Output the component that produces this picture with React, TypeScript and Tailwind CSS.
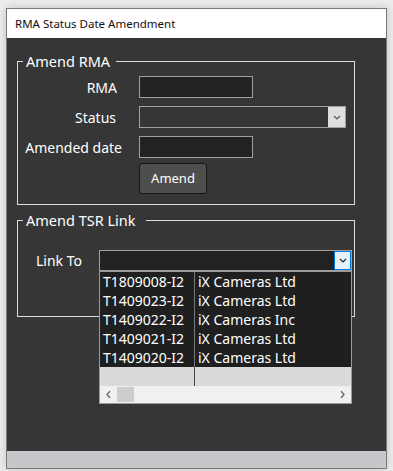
const rows = [
  ['T1809008-I2', 'iX Cameras Ltd'],
  ['T1409023-I2', 'iX Cameras Ltd'],
  ['T1409022-I2', 'iX Cameras Inc'],
  ['T1409021-I2', 'iX Cameras Ltd'],
  ['T1409020-I2', 'iX Cameras Ltd'],
];

function Chevron({ color = '#333', dir = 'down' }: { color?: string; dir?: 'down' | 'left' | 'right' }) {
  const pts = dir === 'down' ? '1,1 4,4 7,1' : dir === 'left' ? '4,0 1,3.5 4,7' : '1,0 4,3.5 1,7';
  const w = dir === 'down' ? 8 : 5;
  const h = dir === 'down' ? 5 : 7;
  return (
    <svg width={w} height={h} viewBox={`0 0 ${w} ${h}`}>
      <polyline points={pts} fill="none" stroke={color} strokeWidth="1.2" />
    </svg>
  );
}

export default function App() {
  return (
    <div className="w-[393px] h-[471px] bg-[#ececec] pt-[8px] px-[6px] pb-[2px] font-['Noto_Sans',sans-serif]">
      <div className="h-full flex flex-col border border-[#7a7a7a] shadow-[0_0_8px_rgba(0,0,0,0.18)]">
        {/* title bar */}
        <div className="h-[29px] bg-white flex items-center pl-[8px] text-[11.5px] text-[#111]">
          RMA Status Date Amendment
        </div>

        {/* body */}
        <div className="flex-1 bg-[#363636] pl-[10px] pr-[31px] pt-[15px] text-white text-[14px]">
          {/* Amend RMA */}
          <fieldset className="border border-[#dcdcdc] pt-[7px] pb-[10px]">
            <legend className="ml-[5px] pl-[3px] pr-[6px] leading-[16px] text-[14.5px]">Amend RMA</legend>
            <div className="flex flex-col gap-[8px]">
              <div className="flex items-center h-[22px]">
                <div className="w-[121px] text-right pr-[22px]">RMA</div>
                <div className="w-[114px] h-[22px] border border-[#a0a0a0] bg-[#222222]" />
              </div>
              <div className="flex items-center h-[22px]">
                <div className="w-[121px] text-right pr-[23px]">Status</div>
                <div className="w-[207px] h-[22px] border border-[#a0a0a0] bg-[#363636] flex justify-end">
                  <div className="w-[17px] h-full bg-[#dfdfdf] flex items-center justify-center">
                    <Chevron color="#555" />
                  </div>
                </div>
              </div>
              <div className="flex items-center h-[22px]">
                <div className="w-[121px] text-right pr-[17px]">Amended date</div>
                <div className="w-[114px] h-[22px] border border-[#a0a0a0] bg-[#222222]" />
              </div>
            </div>
            <button className="ml-[121px] mt-[5px] w-[68px] h-[31px] bg-[#4e4e4e] border border-[#151515] rounded-[3px] text-[13px] text-white flex items-center justify-center">
              Amend
            </button>
          </fieldset>

          {/* Amend TSR Link */}
          <fieldset className="mt-[7px] border border-[#dcdcdc] pt-[22px] pb-[45px]">
            <legend className="ml-[5px] pl-[3px] pr-[10px] leading-[16px] text-[14.5px]">Amend TSR Link</legend>
            <div className="flex items-center h-[21px]">
              <div className="w-[81px] pl-[18px]">Link To</div>
              <div className="relative w-[253px] h-[21px]">
                <div className="h-full border border-[#a0a0a0] bg-[#222222] flex justify-end">
                  <div className="w-[17px] h-full bg-[#e5f1fb] border border-[#0078d7] flex items-center justify-center">
                    <Chevron color="#222" />
                  </div>
                </div>

                {/* open drop-down list */}
                <div className="absolute left-0 top-[21px] w-[253px] border border-[#9a9a9a] bg-[#dadada] z-10">
                  <div className="flex">
                    <div className="w-[94px] bg-[#1f1f1f]">
                      {rows.map(([id]) => (
                        <div key={id} className="h-[19px] leading-[19px] pl-[3px] whitespace-nowrap">{id}</div>
                      ))}
                    </div>
                    <div className="w-px bg-[#777]" />
                    <div className="flex-1 bg-[#1f1f1f]">
                      {rows.map(([id, name]) => (
                        <div key={id} className="h-[19px] leading-[19px] pl-[3px] whitespace-nowrap">{name}</div>
                      ))}
                    </div>
                  </div>
                  <div className="flex h-[19px]">
                    <div className="w-[94px]" />
                    <div className="w-px bg-[#444]" />
                    <div className="flex-1" />
                  </div>
                  <div className="h-[17px] bg-[#f0f0f0] flex items-center">
                    <div className="w-[17px] flex items-center justify-center">
                      <Chevron dir="left" color="#606060" />
                    </div>
                    <div className="w-[17px] h-[15px] bg-[#cdcdcd]" />
                    <div className="flex-1" />
                    <div className="w-[17px] flex items-center justify-center">
                      <Chevron dir="right" color="#606060" />
                    </div>
                  </div>
                </div>
              </div>
            </div>
          </fieldset>
        </div>

        {/* status bar */}
        <div className="h-[17px] bg-[#c6c7cb]" />
      </div>
    </div>
  );
}
